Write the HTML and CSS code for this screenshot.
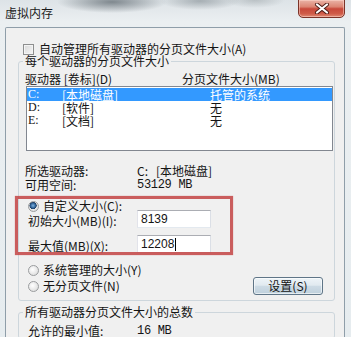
FILE: index.html
```html
<!DOCTYPE html>
<html lang="zh-CN">
<head>
<meta charset="utf-8">
<title>虚拟内存</title>
<link rel="stylesheet" href="styles.css">
</head>
<body>
<div class="window">
  <div class="titlebar">
    <span class="title">虚拟内存</span>
    <button class="close" type="button" aria-label="关闭">
      <svg width="16" height="11" viewBox="0 0 16 11">
        <path d="M3 1.5 L13 9.5 M13 1.5 L3 9.5" stroke="#4a1a14" stroke-width="4" stroke-linecap="round" fill="none"/>
        <path d="M3 1.5 L13 9.5 M13 1.5 L3 9.5" stroke="#ffffff" stroke-width="2.2" stroke-linecap="round" fill="none"/>
      </svg>
    </button>
  </div>
  <div class="client">
    <div class="check-row"><span class="checkbox"></span><span>自动管理所有驱动器的分页文件大小(A)</span></div>

    <fieldset class="group g1">
      <legend>每个驱动器的分页文件大小</legend>
      <div class="list-head"><span class="col-drive">驱动器 [卷标](D)</span><span>分页文件大小(MB)</span></div>
      <div class="listbox">
        <div class="row selected"><span class="c1">C:</span><span class="c2">[本地磁盘]</span><span class="c3">托管的系统</span></div>
        <div class="row"><span class="c1">D:</span><span class="c2">[软件]</span><span class="c3">无</span></div>
        <div class="row"><span class="c1">E:</span><span class="c2">[文档]</span><span class="c3">无</span></div>
      </div>
      <div class="info first"><span class="k">所选驱动器:</span><span class="v">C:&nbsp;&nbsp; [本地磁盘]</span></div>
      <div class="info"><span class="k">可用空间:</span><span class="v mono">53129 MB</span></div>

      <div class="custom">
        <div class="radio-row"><span class="radio on"></span><span>自定义大小(C):</span></div>
        <div class="field-row first"><span class="flabel">初始大小(MB)(I):</span><span class="input">8139</span></div>
        <div class="field-row"><span class="flabel">最大值(MB)(X):</span><span class="input">12208<span class="caret"></span></span></div>
        <div class="annot"></div>
      </div>

      <div class="radio-row sys"><span class="radio"></span><span>系统管理的大小(Y)</span></div>
      <div class="last-row">
        <div class="radio-row"><span class="radio"></span><span>无分页文件(N)</span></div>
        <button class="btn" type="button">设置(S)</button>
      </div>
    </fieldset>

    <fieldset class="group g2">
      <legend>所有驱动器分页文件大小的总数</legend>
      <div class="info total"><span class="k k2">允许的最小值:</span><span class="v mono">16 MB</span></div>
    </fieldset>
  </div>
</div>
</body>
</html>
```

FILE: styles.css
```css
* { box-sizing: border-box; }
html, body { margin: 0; padding: 0; }
body {
  width: 351px;
  height: 337px;
  overflow: hidden;
  font-family: "Noto Sans CJK SC", "Liberation Sans", sans-serif;
  font-size: 12px;
  line-height: 14px;
  color: #141414;
  background:
    radial-gradient(ellipse 55px 11px at 112px 2px, rgba(95,105,112,0.75), rgba(95,105,112,0) 100%),
    radial-gradient(ellipse 40px 9px at 200px 1px, rgba(120,130,136,0.55), rgba(120,130,136,0) 100%),
    radial-gradient(ellipse 30px 8px at 255px 0px, rgba(150,158,162,0.5), rgba(150,158,162,0) 100%),
    linear-gradient(#dde3e7, #ebeff1 22px, #e6ecef);
}
.window { width: 351px; height: 337px; }

.titlebar {
  height: 27px;
  display: flex;
  justify-content: space-between;
  align-items: flex-start;
  padding: 0 6px 0 5px;
}
.title { margin-top: 6px; color: #1b1b1b; }
.close {
  width: 47px;
  height: 19px;
  margin-top: -1px;
  padding: 0;
  border: 1px solid #7b3328;
  border-radius: 0 0 5px 5px;
  background: linear-gradient(#eab3a6 0%, #dc8573 40%, #c8483a 52%, #cf5b48 80%, #e08a74 100%);
  box-shadow: inset 0 0 0 1px rgba(255,220,210,0.5);
  display: flex;
  align-items: center;
  justify-content: center;
}
.close svg { display: block; }

.client {
  margin: 0 6px 0 5px;
  height: 310px;
  background: #f0f0f0;
  border: 1px solid #8f9ea9;
  border-bottom: none;
  border-radius: 2px 2px 0 0;
  padding-top: 14px;
}

.check-row {
  display: flex;
  align-items: center;
  gap: 5px;
  margin-left: 17px;
}
.checkbox {
  width: 11px;
  height: 11px;
  border: 1px solid #8e8f8f;
  background: linear-gradient(135deg, #d8d8d8, #f7f7f7);
  box-shadow: inset 0 0 0 1px #f4f4f4;
}

.group {
  border: 1px solid #cdd6dc;
  border-radius: 3px;
  margin: 0;
  min-width: 0;
}
.group legend {
  padding: 0 2px;
  margin-left: -2px;
  line-height: 14px;
}
.g1 {
  margin: -2px 9px 0 12px;
  padding: 4px 0 5px 6px;
}

.list-head { display: flex; }
.col-drive { width: 157px; }

.listbox {
  margin-left: 1px;
  width: 307px;
  height: 65px;
  border: 1px solid #828790;
  background: #fff;
  padding-top: 1px;
}
.row {
  display: flex;
  height: 13px;
  line-height: 13px;
  font-family: "Liberation Serif", "Noto Sans CJK SC", serif;
}
.row .c2, .row .c3 { font-family: "Noto Sans CJK SC", sans-serif; }
.row.selected { background: #3399ff; color: #fff; }
.c1 { width: 35px; padding-left: 1px; }
.c2 { width: 148px; }

.info { display: flex; }
.info.first { margin-top: 13px; }
.k { width: 112px; }
.mono { font-family: "Liberation Mono", monospace; letter-spacing: -0.3px; }

.custom {
  position: relative;
  margin-top: 7px;
}
.radio-row {
  display: flex;
  align-items: center;
  gap: 4px;
  margin-left: 3px;
}
.radio {
  width: 11px;
  height: 11px;
  border-radius: 50%;
  border: 1px solid #9a9c9e;
  background: radial-gradient(circle at 40% 40%, #ffffff, #dedede 80%);
}
.radio.on {
  background: radial-gradient(circle at 45% 40%, #7fb1e0 0, #2c5f93 2.5px, #1d3b5e 3.4px, #e8e8e8 3.8px, #d4d4d4 100%);
}

.field-row {
  display: flex;
  align-items: center;
  height: 18px;
  margin: 7px 0 0 3px;
}
.field-row.first { margin-top: -3px; }
.flabel { width: 109px; padding-top: 3px; }
.input {
  width: 74px;
  height: 18px;
  border: 1px solid;
  border-color: #abadb3 #dbdfe6 #e3e9ef #e2e3ea;
  background: #fff;
  padding: 1px 0 0 3px;
  font-family: "Liberation Sans", sans-serif;
  font-size: 12px;
  line-height: 15px;
  display: flex;
  align-items: center;
}
.caret {
  display: inline-block;
  width: 1px;
  height: 13px;
  background: #000;
  margin-left: 1px;
}
.annot {
  position: absolute;
  left: -10px;
  top: -3px;
  width: 218px;
  height: 59px;
  border: 3px solid rgba(196, 72, 72, 0.88);
  box-shadow: 0 0 1px rgba(196,72,72,0.6);
}

.radio-row.sys { margin-top: 10px; }
.last-row {
  display: flex;
  align-items: center;
  justify-content: space-between;
  height: 18px;
}
.btn {
  width: 70px;
  height: 18px;
  margin-right: 11px;
  padding: 0;
  border: 1px solid #5f7587;
  border-radius: 3px;
  background: linear-gradient(#eef4f8 0%, #e1eaf0 45%, #cddbe5 52%, #bfd0dc 100%);
  box-shadow: inset 0 0 0 1px rgba(255,255,255,0.6);
  font-family: "Noto Sans CJK SC", sans-serif;
  font-size: 12px;
  line-height: 14px;
  color: #141414;
}

.g2 {
  margin: 4px 9px 0 12px;
  padding: 5px 0 0 6px;
}
.total .k2 { width: 109px; margin-left: 3px; }
```
